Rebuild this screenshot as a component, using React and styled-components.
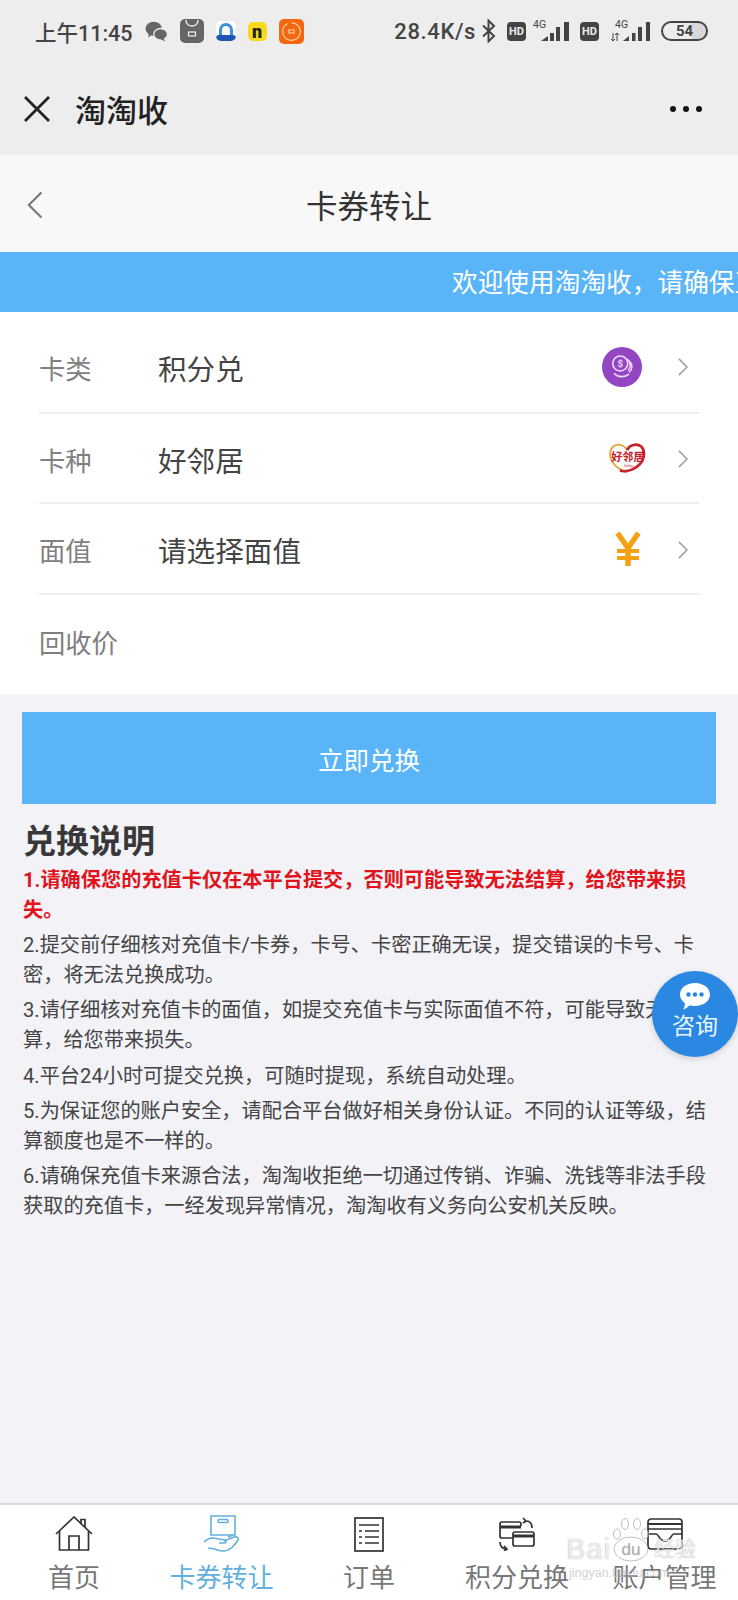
import React from "react";
import styled, { createGlobalStyle } from "styled-components";

const GlobalStyle = createGlobalStyle`
  html, body {
    margin: 0;
    padding: 0;
    background: #f2f2f7;
  }
  * {
    box-sizing: border-box;
  }
`;

const FONT = `"Roboto", "Noto Sans CJK SC", sans-serif`;

const Page = styled.div`
  position: relative;
  width: 738px;
  height: 1600px;
  overflow: hidden;
  display: flex;
  flex-direction: column;
  background: #f2f2f7;
  font-family: ${FONT};
  color: #333;
`;

const TopArea = styled.div`
  height: 155px;
  background: #ededed;
  display: flex;
  flex-direction: column;
`;
const StatusBar = styled.div`
  height: 62px;
  padding: 0 30px 0 35px;
  display: flex;
  align-items: center;
  color: #444;
`;
const Clock = styled.span`
  font-size: 21.5px;
  font-weight: 500;
  margin-right: 12px;
`;
const AppIcons = styled.div`
  display: flex;
  align-items: center;
  gap: 12px;
`;
const AppIcon = styled.div`
  width: ${(p) => p.size || 24}px;
  height: ${(p) => p.size || 24}px;
  border-radius: 5px;
  background: ${(p) => p.bg};
  color: ${(p) => p.fg || "#fff"};
  font-size: ${(p) => p.fs || 8}px;
  font-weight: 900;
  display: flex;
  align-items: center;
  justify-content: center;
  overflow: hidden;
`;
const StatusRight = styled.div`
  margin-left: auto;
  display: flex;
  align-items: center;
`;
const Speed = styled.span`
  font-size: 22px;
  letter-spacing: 0.6px;
  font-weight: 500;
  margin-right: 5px;
`;
const HdBadge = styled.span`
  width: 19px;
  height: 19px;
  border-radius: 4px;
  background: #444;
  color: #ededed;
  font-size: 11px;
  font-weight: 700;
  display: flex;
  align-items: center;
  justify-content: center;
  margin: 0 ${(p) => p.gap}px 0 11px;
`;
const Battery = styled.div`
  width: 47px;
  height: 20px;
  margin-left: 11px;
  border: 2px solid #444;
  border-radius: 10px;
  font-size: 15px;
  font-weight: 700;
  line-height: 16px;
  text-align: center;
  overflow: hidden;
  background: linear-gradient(to right, #ededed 68%, #d8d8d8 68%);
`;

const TitleBar = styled.div`
  flex: 1;
  padding: 0 36px 0 22px;
  display: flex;
  align-items: center;
`;
const TitleText = styled.div`
  margin-left: 23px;
  font-size: 31px;
  font-weight: 500;
  color: #222;
`;
const MoreDots = styled.div`
  margin-left: auto;
  display: flex;
  gap: 7px;
`;
const Dot = styled.span`
  width: 6px;
  height: 6px;
  border-radius: 50%;
  background: #111;
`;

const PageHeader = styled.div`
  height: 97px;
  background: #f8f8f8;
  display: flex;
  align-items: center;
  justify-content: center;
  position: relative;
  font-size: 31.5px;
  color: #333;
`;
const BackButton = styled.div`
  position: absolute;
  left: 26px;
  top: 36px;
  display: flex;
`;

const Notice = styled.div`
  height: 60px;
  background: #5ab4f8;
  color: #fff;
  font-size: 25.7px;
  line-height: 62px;
  padding-left: 452px;
  white-space: nowrap;
  overflow: hidden;
`;

const FormCard = styled.div`
  background: #fff;
  padding: 0 39px;
`;
const FormRow = styled.div`
  height: ${(p) => p.h}px;
  padding: ${(p) => p.pt || 0}px 0 ${(p) => p.pb || 0}px;
  display: flex;
  align-items: center;
  border-bottom: ${(p) => (p.last ? "none" : "2px solid #efefef")};
`;
const RowLabel = styled.div`
  width: 119px;
  font-size: 26.3px;
  color: #808080;
`;
const RowValue = styled.div`
  flex: 1;
  font-size: 28.6px;
  color: #444;
`;
const RowIcon = styled.div`
  width: 44px;
  height: 44px;
  display: flex;
  align-items: center;
  justify-content: center;
  margin-right: ${(p) => p.gap}px;
  flex-shrink: 0;
`;
const CoinBadge = styled.div`
  width: 40px;
  height: 40px;
  border-radius: 50%;
  background: #9246c4;
  display: flex;
  align-items: center;
  justify-content: center;
`;
const Chevron = styled.div`
  display: flex;
  margin-right: 10px;
`;

const SubmitButton = styled.div`
  height: 92px;
  margin: 18px 22px 0;
  background: #5ab4f8;
  color: #fff;
  font-size: 25.5px;
  display: flex;
  align-items: center;
  justify-content: center;
`;

const Rules = styled.div`
  flex: 1;
  padding: 14px 22px 0 23px;
`;
const RulesTitle = styled.div`
  font-size: 33px;
  font-weight: 700;
  line-height: 48px;
  color: #383838;
`;
const RuleItem = styled.p`
  margin: 0 0 5.6px;
  font-size: 20.2px;
  line-height: 29.8px;
  color: ${(p) => (p.warn ? "#e1141c" : "#444")};
  font-weight: ${(p) => (p.warn ? 700 : 400)};
`;

const ChatBubble = styled.div`
  position: absolute;
  left: 652px;
  top: 971px;
  width: 86px;
  height: 86px;
  border-radius: 50%;
  background: #2a88e2;
  color: #e8f4ff;
  font-size: 23px;
  box-shadow: 0 2px 6px rgba(0, 0, 0, 0.15);
  display: flex;
  flex-direction: column;
  align-items: center;
  justify-content: center;
  gap: 4px;
  padding-bottom: 6px;
  line-height: 26px;
`;

const TabBar = styled.div`
  height: 97px;
  background: #fff;
  border-top: 2px solid #d9d9d9;
  display: flex;
`;
const Tab = styled.div`
  width: ${(p) => p.w}px;
  flex-shrink: 0;
  display: flex;
  flex-direction: column;
  align-items: center;
  padding-top: 10px;
  color: ${(p) => (p.active ? "#62b0de" : "#777")};
  font-size: 26px;
  line-height: 36px;
  white-space: nowrap;
`;
const TabIcon = styled.div`
  height: 38px;
  margin-bottom: 7px;
  display: flex;
  align-items: center;
  justify-content: center;
`;

// site watermark stamped over the bottom right corner
const Watermark = styled.div`
  position: absolute;
  left: 566px;
  top: 1518px;
  color: rgba(255, 255, 255, 0.82);
  text-shadow: 0 0 1px rgba(110, 110, 110, 0.7);
  pointer-events: none;
  font-family: "Liberation Sans", "Noto Sans CJK SC", sans-serif;
`;
const WatermarkMain = styled.div`
  display: flex;
  align-items: flex-end;
  line-height: 26px;
`;
const WatermarkBrand = styled.span`
  font-size: 29px;
  letter-spacing: 1px;
`;
const WatermarkCn = styled.span`
  font-size: 21px;
  margin-left: 3px;
`;
const WatermarkSub = styled.div`
  font-size: 12.5px;
  line-height: 16px;
  padding-left: 3px;
  margin-top: 3px;
  color: rgba(190, 190, 190, 0.7);
  text-shadow: none;
`;

const CloseIcon = () => (
  <svg width="30" height="30" viewBox="0 0 30 30" fill="none" stroke="#222" strokeWidth="2.8">
    <path d="M3 3 L27 27 M27 3 L3 27" />
  </svg>
);

const Arrow = ({ dir, size, color, sw }) => (
  <svg width={size * 0.6} height={size} viewBox="0 0 12 20" fill="none" stroke={color} strokeWidth={sw}>
    <path d={dir === "left" ? "M11 1 L2 10 L11 19" : "M1 1 L10 10 L1 19"} />
  </svg>
);

const WeChatGlyph = () => (
  <svg width="23" height="21" viewBox="0 0 25 23" fill="#666">
    <ellipse cx="9.5" cy="8.5" rx="9" ry="7.8" />
    <path d="M4 13 L3.5 18 L9 14 Z" />
    <ellipse cx="17" cy="14.5" rx="7.5" ry="6.3" stroke="#ededed" strokeWidth="1.4" />
    <path d="M20 19 L22 22.5 L17 20 Z" />
  </svg>
);

const BagGlyph = () => (
  <svg width="24" height="24" viewBox="0 0 24 24" fill="none" stroke="#eee" strokeWidth="1.4">
    <path d="M6 1 C6 9 18 9 18 1" />
    <rect x="8.5" y="13" width="7" height="4" strokeWidth="1.2" />
  </svg>
);

const ArchGlyph = () => (
  <svg width="20" height="22" viewBox="0 0 20 22">
    <rect width="20" height="22" rx="4" fill="#fff" />
    <path d="M4.5 15 V10 A5.5 5.5 0 0 1 15.5 10 V15" fill="none" stroke="#3f8fd8" strokeWidth="3" />
    <rect x="0" y="15" width="20" height="6" rx="3" fill="#1f56b4" />
  </svg>
);

const RingGlyph = () => (
  <svg width="25" height="25" viewBox="0 0 24 24" fill="none" stroke="#ffd9bf" strokeWidth="1">
    <circle cx="12" cy="12" r="8.5" strokeDasharray="36 4" />
    <rect x="9.5" y="10.5" width="5" height="3" />
  </svg>
);

const BluetoothGlyph = () => (
  <svg width="15" height="24" viewBox="0 0 15 24" fill="none" stroke="#444" strokeWidth="2">
    <path d="M2 6.5 L13 17 L7.5 22.5 V1.5 L13 7 L2 17.5" />
  </svg>
);

const Signal = () => (
  <svg width="36" height="24" viewBox="0 0 36 24">
    <text x="0" y="9" fontSize="10.5" fontFamily="Roboto" fill="#444">4G</text>
    <g fill="#444">
      <path d="M8 22 L15 17 V22 Z" />
      <rect x="17" y="14" width="4" height="8" />
      <rect x="23" y="8" width="4" height="14" />
      <rect x="31" y="3" width="5" height="19" />
    </g>
  </svg>
);

const SignalWithArrows = () => (
  <svg width="39" height="24" viewBox="0 0 39 24">
    <text x="4" y="9" fontSize="10.5" fontFamily="Roboto" fill="#444">4G</text>
    <path d="M2 14 V22 M0 20 L2 22 L4 20 M6 22 V14 M4 16 L6 14 L8 16" stroke="#444" fill="none" strokeWidth="1" />
    <g fill="#444">
      <path d="M12 22 L18 17 V22 Z" />
      <rect x="21" y="14" width="3.5" height="8" />
      <rect x="27" y="8" width="4" height="14" />
      <rect x="35" y="3" width="4" height="19" />
    </g>
  </svg>
);

const CoinsGlyph = () => (
  <svg width="30" height="30" viewBox="0 0 34 34" fill="none" stroke="#efd9fa" strokeWidth="1.8">
    <circle cx="15" cy="13" r="8.5" />
    <path d="M23 8 A9 9 0 0 1 24 21 M26 11 A8 8 0 0 1 25 23" />
    <path d="M8 24 C12 29 20 29 25 25" />
    <text x="15" y="17" fontSize="11" fontWeight="700" textAnchor="middle" fill="#efd9fa" stroke="none">$</text>
  </svg>
);

const HeartLogo = () => (
  <svg width="38" height="32" viewBox="0 0 42 36" fill="none">
    <path d="M21 33 C8 28 2 20 2 12 C2 5 8 1 13 2 C17 3 20 5 21 8" stroke="#e8a33a" strokeWidth="2" />
    <path d="M21 8 C24 2 32 0 37 4 C42 9 41 20 33 26 C28 30 20 33 13 31" stroke="#c8202c" strokeWidth="3" />
    <text x="22" y="20" fontSize="12.5" fontWeight="700" textAnchor="middle" fill="#c8202c" fontFamily="Noto Sans CJK SC">好邻居</text>
    <text x="23" y="27" fontSize="4.5" textAnchor="middle" fill="#c8202c" fontFamily="Roboto">linliju</text>
  </svg>
);

const YuanGlyph = () => (
  <svg width="26" height="35" viewBox="0 0 26 35" fill="none" stroke="#f6a113" strokeWidth="5.4">
    <path d="M2.5 1 L13 16 L23.5 1 M13 15 V34" />
    <path d="M2 19 H24 M2 26 H24" strokeWidth="3.8" />
  </svg>
);

const ChatGlyph = () => (
  <svg width="32" height="28" viewBox="0 0 32 28">
    <path d="M16 1 C24.5 1 31 6 31 12.5 C31 19 24.5 24 16 24 C14 24 12 23.7 10.5 23.3 C9 25 7 27 4 27.5 C5.5 25.5 6 23.5 5.8 21 C2.8 19 1 16 1 12.5 C1 6 7.5 1 16 1 Z" fill="#fff" />
    <g fill="#2a88e2">
      <circle cx="9.5" cy="12.5" r="2.2" />
      <circle cx="16" cy="12.5" r="2.2" />
      <circle cx="22.5" cy="12.5" r="2.2" />
    </g>
  </svg>
);

const HomeIcon = () => (
  <svg width="38" height="36" viewBox="0 0 38 36" fill="none" stroke="#333" strokeWidth="1.7">
    <path d="M1 18 L19 1 L37 18" />
    <path d="M26 8 V3.5 H30 V11.5" />
    <path d="M4.5 15 V34 H33.5 V15" />
    <path d="M14 34 V20 H24 V34" />
  </svg>
);

const HandCardIcon = () => (
  <svg width="38" height="38" viewBox="0 0 38 38" fill="none" stroke="#62b0de" strokeWidth="1.6">
    <path d="M8 20 V1 H32 V20 Z" />
    <rect x="15" y="4.5" width="10" height="3" rx="1" />
    <path d="M1 27 C5 23 10 22 15 24 L22 25 C24 26 23 28 21 28 L16 28" />
    <path d="M21 26 L31 22 C34 21 36 23 35 25 C31 31 27 36 20 36 C15 36 12 33 5 33" />
    <path d="M25 22 L30 20" />
  </svg>
);

const OrderIcon = () => (
  <svg width="30" height="35" viewBox="0 0 30 35" fill="none" stroke="#333" strokeWidth="1.7">
    <rect x="1" y="1" width="28" height="33" />
    <path d="M5 8 H25 M5 14 H8 M11 14 H25 M5 20 H8 M11 20 H25 M5 26 H8 M11 26 H25" />
  </svg>
);

const ExchangeIcon = () => (
  <svg width="36" height="34" viewBox="0 0 36 34" fill="none" stroke="#333" strokeWidth="1.7">
    <path d="M14 21 H3 C2 21 1 20 1 19 V7 C1 6 2 5 3 5 H20 C21 5 22 6 22 7 V9" />
    <path d="M1 10 H22" strokeWidth="3" />
    <rect x="14" y="15" width="21" height="14" rx="2" />
    <path d="M14 19 H35" strokeWidth="3" />
    <path d="M24 1 L27 4 L24 6 M27 4 C31 4 33 6 33 11" />
    <path d="M1 25 C1 30 4 32 8 32 M5 29 L8 32 L5 34" />
  </svg>
);

const WalletIcon = () => (
  <svg width="36" height="32" viewBox="0 0 36 32" fill="none" stroke="#333" strokeWidth="1.7">
    <rect x="1" y="1" width="34" height="30" rx="3" />
    <path d="M1 6 H35" strokeWidth="2.2" />
    <path d="M1 11 H35" />
    <path d="M1 16 H9 C12 16 12 23 18 23 C24 23 24 16 27 16 H35" />
  </svg>
);

// paw mark with the "du" pad of the watermark
const PawMark = () => (
  <svg width="40" height="44" viewBox="0 0 40 44" fill="rgba(255,255,255,0.55)" stroke="rgba(130,130,130,0.5)" strokeWidth="1">
    <ellipse cx="6" cy="16" rx="3.5" ry="5" />
    <ellipse cx="14" cy="6" rx="3.5" ry="5.5" />
    <ellipse cx="26" cy="6" rx="3.5" ry="5.5" />
    <ellipse cx="34" cy="16" rx="3.5" ry="5" />
    <ellipse cx="20" cy="31" rx="17" ry="12" />
    <text x="20" y="37" fontSize="17" textAnchor="middle" stroke="none" fill="rgba(150,150,150,0.6)" fontFamily="Liberation Sans">du</text>
  </svg>
);

const formRows = [
  { label: "卡类", value: "积分兑", h: 102, pt: 10, gap: 34, icon: <CoinBadge><CoinsGlyph /></CoinBadge> },
  { label: "卡种", value: "好邻居", h: 90, pt: 2, gap: 29, icon: <HeartLogo /> },
  { label: "面值", value: "请选择面值", h: 91, pt: 2, gap: 28, icon: <YuanGlyph /> },
  { label: "回收价", h: 99, pb: 6, last: true },
];

const rules = [
  "2.提交前仔细核对充值卡/卡券，卡号、卡密正确无误，提交错误的卡号、卡密，将无法兑换成功。",
  "3.请仔细核对充值卡的面值，如提交充值卡与实际面值不符，可能导致无法结算，给您带来损失。",
  "4.平台24小时可提交兑换，可随时提现，系统自动处理。",
  "5.为保证您的账户安全，请配合平台做好相关身份认证。不同的认证等级，结算额度也是不一样的。",
  "6.请确保充值卡来源合法，淘淘收拒绝一切通过传销、诈骗、洗钱等非法手段获取的充值卡，一经发现异常情况，淘淘收有义务向公安机关反映。",
];

const tabs = [
  { label: "首页", w: 148, icon: <HomeIcon /> },
  { label: "卡券转让", w: 147, icon: <HandCardIcon />, active: true },
  { label: "订单", w: 148, icon: <OrderIcon /> },
  { label: "积分兑换", w: 148, icon: <ExchangeIcon /> },
  { label: "账户管理", w: 147, icon: <WalletIcon /> },
];

const App = () => {
  return (
    <Page>
      <GlobalStyle />
      <TopArea>
        <StatusBar>
          <Clock>上午11:45</Clock>
          <AppIcons>
            <WeChatGlyph />
            <AppIcon bg="#666"><BagGlyph /></AppIcon>
            <AppIcon size={20} bg="transparent"><ArchGlyph /></AppIcon>
            <AppIcon size={19} bg="#f7da1e" fg="#222" fs={18}>n</AppIcon>
            <AppIcon size={25} bg="#f4670f"><RingGlyph /></AppIcon>
          </AppIcons>
          <StatusRight>
            <Speed>28.4K/s</Speed>
            <BluetoothGlyph />
            <HdBadge gap={7}>HD</HdBadge>
            <Signal />
            <HdBadge gap={12}>HD</HdBadge>
            <SignalWithArrows />
            <Battery>54</Battery>
          </StatusRight>
        </StatusBar>
        <TitleBar>
          <CloseIcon />
          <TitleText>淘淘收</TitleText>
          <MoreDots>
            <Dot />
            <Dot />
            <Dot />
          </MoreDots>
        </TitleBar>
      </TopArea>

      <PageHeader>
        <BackButton>
          <Arrow dir="left" size={28} color="#777" sw={1.5} />
        </BackButton>
        卡券转让
      </PageHeader>

      <Notice>欢迎使用淘淘收，请确保正确提交</Notice>

      <FormCard>
        {formRows.map((row) => (
          <FormRow key={row.label} h={row.h} pt={row.pt} pb={row.pb} last={row.last}>
            <RowLabel>{row.label}</RowLabel>
            <RowValue>{row.value}</RowValue>
            {row.icon && <RowIcon gap={row.gap}>{row.icon}</RowIcon>}
            {row.icon && (
              <Chevron>
                <Arrow dir="right" size={18} color="#a0a0a0" sw={1.7} />
              </Chevron>
            )}
          </FormRow>
        ))}
      </FormCard>

      <SubmitButton>立即兑换</SubmitButton>

      <Rules>
        <RulesTitle>兑换说明</RulesTitle>
        <RuleItem warn>1.请确保您的充值卡仅在本平台提交，否则可能导致无法结算，给您带来损失。</RuleItem>
        {rules.map((text) => (
          <RuleItem key={text}>{text}</RuleItem>
        ))}
      </Rules>

      <TabBar>
        {tabs.map((tab) => (
          <Tab key={tab.label} w={tab.w} active={tab.active}>
            <TabIcon>{tab.icon}</TabIcon>
            {tab.label}
          </Tab>
        ))}
      </TabBar>

      <ChatBubble>
        <ChatGlyph />
        咨询
      </ChatBubble>

      <Watermark>
        <WatermarkMain>
          <WatermarkBrand>Bai</WatermarkBrand>
          <PawMark />
          <WatermarkCn>经验</WatermarkCn>
        </WatermarkMain>
        <WatermarkSub>jingyan.baidu.com</WatermarkSub>
      </Watermark>
    </Page>
  );
};

export default App;
